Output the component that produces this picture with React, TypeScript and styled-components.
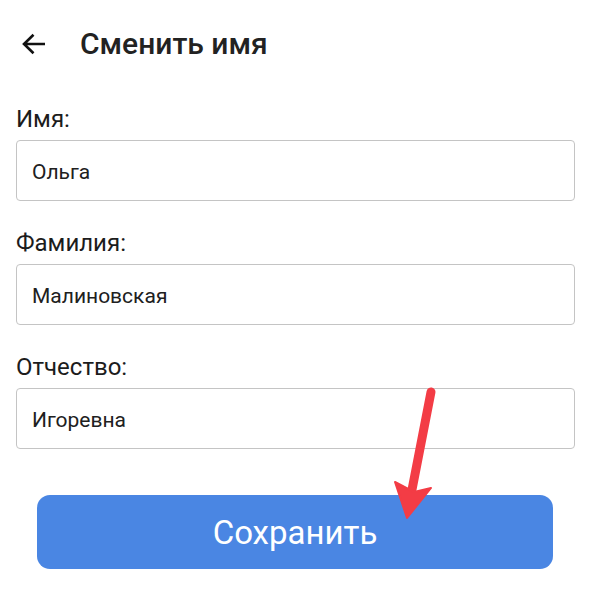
import React from "react";
import styled, { createGlobalStyle } from "styled-components";

const Global = createGlobalStyle`
  html, body { margin: 0; padding: 0; background: #ffffff; }
  body { font-family: Roboto, "Noto Sans", sans-serif; color: #1f1f1f; }
  * { box-sizing: border-box; }
`;

const Page = styled.div`
  position: relative;
  width: 590px;
  height: 612px;
  overflow: hidden;
  background: #fff;
`;

const Header = styled.div`
  display: flex;
  align-items: center;
  height: 88px;
  padding-left: 20px;
`;

const BackButton = styled.div`
  width: 28px;
  height: 28px;
  display: flex;
  align-items: center;
  justify-content: center;
  margin-right: 32px;
`;

const Title = styled.h1`
  margin: 0;
  font-size: 30px;
  line-height: 36px;
  font-weight: 500;
  color: #222;
`;

const Form = styled.div`
  display: flex;
  flex-direction: column;
  padding: 17px 15px 0 16px;
`;

const Field = styled.div`
  display: flex;
  flex-direction: column;
  margin-bottom: 28px;
`;

const Label = styled.label`
  font-size: 24px;
  line-height: 28px;
  color: #1c1c1c;
  margin-bottom: 7px;
`;

const InputBox = styled.div`
  height: 61px;
  border: 1.5px solid #c4c4c4;
  border-radius: 4px;
  display: flex;
  align-items: center;
  padding: 3px 0 0 15px;
  font-size: 21px;
  color: #202020;
`;

const ButtonRow = styled.div`
  padding: 18px 37px 0 37px;
`;

const SaveButton = styled.button`
  width: 100%;
  height: 74px;
  border: none;
  border-radius: 13px;
  background: #4a86e3;
  color: #fff;
  font-family: Roboto, sans-serif;
  font-size: 33px;
  font-weight: 400;
  padding: 0;
`;

const Overlay = styled.svg`
  position: absolute;
  left: 0;
  top: 0;
  pointer-events: none;
`;

const fields = [
  { label: "Имя:", value: "Ольга" },
  { label: "Фамилия:", value: "Малиновская" },
  { label: "Отчество:", value: "Игоревна" },
];

export default function App() {
  return (
    <Page>
      <Global />
      <Header>
        <BackButton>
          <svg width="28" height="28" viewBox="0 0 28 28">
            <path
              d="M25 14H4.5M13.5 4.8L4 14l9.5 9.2"
              fill="none"
              stroke="#111"
              strokeWidth="2.6"
              strokeLinecap="butt"
              strokeLinejoin="miter"
            />
          </svg>
        </BackButton>
        <Title>Сменить имя</Title>
      </Header>
      <Form>
        {fields.map((f) => (
          <Field key={f.label}>
            <Label>{f.label}</Label>
            <InputBox>{f.value}</InputBox>
          </Field>
        ))}
      </Form>
      <ButtonRow>
        <SaveButton>Сохранить</SaveButton>
      </ButtonRow>
      <Overlay width="590" height="612" viewBox="0 0 590 612">
        <line x1="431" y1="392" x2="410" y2="500" stroke="#f33c45" strokeWidth="9" strokeLinecap="round" />
        <path d="M395 482 L407 518 L431 488 L414 492 Z" fill="#f33c45" stroke="#f33c45" strokeWidth="2" strokeLinejoin="round" />
      </Overlay>
    </Page>
  );
}
